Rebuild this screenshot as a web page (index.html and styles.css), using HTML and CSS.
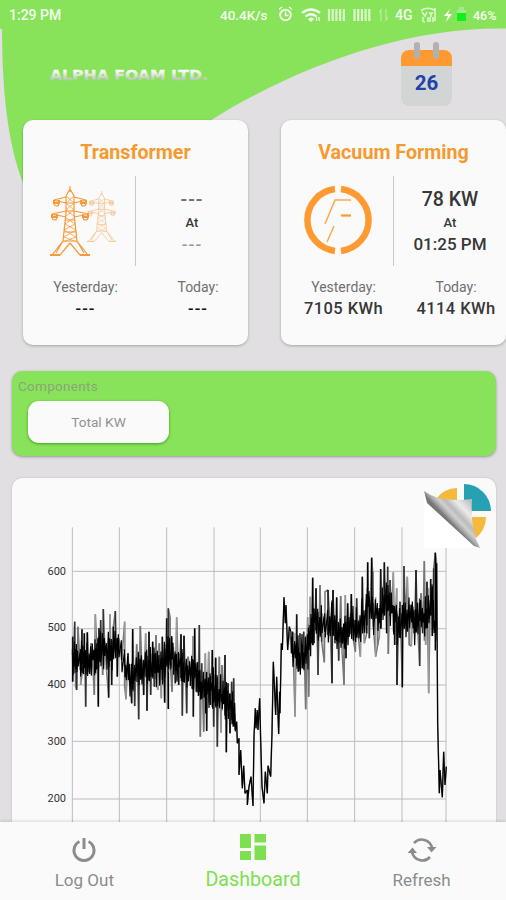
FILE: index.html
```html
<!DOCTYPE html>
<html lang="en">
<head>
<meta charset="utf-8">
<title>Alpha Foam Dashboard</title>
<link rel="stylesheet" href="styles.css">
</head>
<body>
<div class="app">
  <svg class="backdrop" width="506" height="200" viewBox="0 0 506 200"><path fill="#89e35a" d="M0 0H506V28.500C420 27 331 55 253 96Q235 105 213 119L100 190H26Q2 137 2 29H0Z"/></svg>

  <header class="status">
    <span class="time">1:29 PM</span>
    <div class="status-right">
      <span class="speed">40.4K/s</span>
      <svg class="status-icons" width="122" height="20" viewBox="0 0 122 20" fill="none" stroke="#f4fff0">
        <circle cx="6.500" cy="10" r="5.300" stroke-width="1.800"/><path stroke-width="1.500" d="M6.500 6.500V10.500H9.500M0 4.500 3 2M13 4.500 10 2"/>
        <path stroke-width="2.200" d="M23 8Q32 1 41 8M26.500 11.500Q32 7 37.500 11.500"/><path fill="#f4fff0" stroke="none" d="M29 14Q32 11 35 14L32 17Z"/><path stroke-width="1.200" d="M37.500 16V12m2.500 0v4"/>
        <path stroke-width="2.200" opacity=".75" d="M50 4V16M53.700 4V16M57.400 4V16M61.100 4V16M64.800 4V16M75.500 4V16M79.200 4V16M82.900 4V16M86.600 4V16M90.300 4V16"/>
        <path opacity=".4" stroke-width="1.300" d="M102 16V5l-2 3M107 4V15l2-3"/>
      </svg>
      <span class="net">4G</span>
      <svg width="47" height="20" viewBox="0 0 47 20"><g fill="none" stroke="#f4fff0" stroke-width="1.500" opacity=".8"><path d="M1 5.500Q8 1 15 5.500M2 7l3 4 2-4M9 8h4M11 8v4M3 12v4q0 1 2 1M8 12v5M10 12v5M13 12v5M15 3v13"/></g><path fill="#fff" d="M30 4 24 11h4l-2 6 6-8h-4Z"/><path fill="#a6e98b" d="M37 5h2V2h5v3h2v3h-9Z"/><path fill="#0cf21c" d="M37 8h9v8H37Z"/></svg>
      <span class="pct">46%</span>
    </div>
  </header>

  <div class="brand">
    <svg class="wordmark" width="162" height="20" viewBox="0 0 162 20"><defs><linearGradient id="silver" x1="0" y1="0" x2="0" y2="1"><stop offset=".25" stop-color="#fff"/><stop offset=".8" stop-color="#bdc8b8"/></linearGradient></defs><text x="1" y="14.500" textLength="158" lengthAdjust="spacingAndGlyphs" fill="url(#silver)" stroke="url(#silver)">ALPHA FOAM LTD.</text></svg>
    <div class="calendar"><i></i><i></i><span>26</span></div>
  </div>

  <section class="meters">
    <article class="meter">
      <h2>Transformer</h2>
      <div class="reading">
        <svg class="towers" width="68" height="72" viewBox="0 0 68 72">
          <defs><g id="tower" fill="none" stroke="#f79a3b" stroke-width="1.200">
            <path d="M20 0V6M16 10 20 3 24 10V27L27 55 38 69M16 10V27L13 55 2 69M16 11 4 14 16 17M24 11 36 14 24 17M16 25 2 28 16 31M24 25 39 28 24 31M13 55H27M16 17H24M16 25H24M15 34H25M14 46H26M13 55 6 67M27 55 34 67M20 57 10 69M20 57 30 69"/>
            <path stroke-width=".8" d="M16 10 24 17 16 24 25 31 15 38 26 44 14 51 27 56M24 10 16 17 24 24 15 31 25 38 14 44 26 51 13 56"/>
            <path stroke-width="2" d="M0 69H10M30 69H40M4 14v3H9V14M31 14v3H36V14M2 28v3H7V28M33 28v3H38V28"/><ellipse cx="6.500" cy="18" rx="2.300" ry="2"/><ellipse cx="33.500" cy="18" rx="2.300" ry="2"/><ellipse cx="4.500" cy="32" rx="2.300" ry="2"/><ellipse cx="35.500" cy="32" rx="2.300" ry="2"/>
          </g></defs>
          <use href="#tower" transform="translate(37 5) scale(.73)" opacity=".5"/><use href="#tower"/>
        </svg>
        <div class="power"><b class="muted">---</b><span>At</span><em class="faint">---</em></div>
      </div>
      <div class="totals"><div><span>Yesterday:</span><b class="none">---</b></div><div><span>Today:</span><b class="none">---</b></div></div>
    </article>
    <article class="meter">
      <h2>Vacuum Forming</h2>
      <div class="reading">
        <svg class="forming" width="70" height="70" viewBox="0 0 70 70" fill="none" stroke="#ff9a32"><path stroke-width="6.500" d="M32 4.100A31.100 31.100 0 0 0 32 65.900M38 4.100A31.100 31.100 0 0 1 38 65.900"/><path stroke-width="1.500" opacity=".85" d="M48 15H32L22 39M31 41 24 57"/><path stroke-width="2.200" d="M38 30.500h10"/></svg>
        <div class="power"><b>78 KW</b><span>At</span><em>01:25 PM</em></div>
      </div>
      <div class="totals"><div><span>Yesterday:</span><b>7105 KWh</b></div><div><span>Today:</span><b>4114 KWh</b></div></div>
    </article>
  </section>

  <section class="components"><h3>Components</h3><button>Total KW</button></section>

  <section class="chart-card">
    <svg class="chart" width="450" height="312" viewBox="0 0 1350 936"></svg>
    <svg class="peel" width="72" height="72" viewBox="0 0 72 72"><defs><linearGradient id="fold" gradientUnits="userSpaceOnUse" x1="25" y1="38" x2="46" y2="18"><stop offset="0" stop-color="#777"/><stop offset=".12" stop-color="#aaa"/><stop offset=".25" stop-color="#d0d0d0"/><stop offset=".4" stop-color="#bbb"/><stop offset=".65" stop-color="#ececec"/><stop offset="1" stop-color="#c0c0c0"/></linearGradient></defs><path fill="#fff" d="M0 9 56 65H0Z"/><path fill="#f5b93d" d="M33 20V5A27 27 0 0 0 12 16L28 23ZM46 34H62A28 28 0 0 1 52 55L42 43Z"/><path fill="#26a0b3" d="M40 1V28H67A27 27 0 0 0 40 1Z"/><path fill="url(#fold)" d="M0 8Q16 20 48 16 46 46 56 65L50 63 3 20Z"/></svg>
  </section>

  <nav class="tabs">
    <a><svg width="24" height="26" viewBox="0 0 24 26" fill="none" stroke="#8c8c8c" stroke-width="3"><path d="M7.500 4.500A10 10 0 1 0 16.500 4.500M12 1V12"/></svg><span>Log Out</span></a>
    <a class="active"><svg width="26" height="26" viewBox="0 0 26 26" fill="#7edf50"><path d="M0 0H11V14H0ZM14.500 0H26V8.500H14.500ZM0 17H11V26H0ZM14.500 11.500H26V26H14.500Z"/></svg><span>Dashboard</span></a>
    <a><svg width="28" height="26" viewBox="0 0 28 26" fill="none" stroke="#8c8c8c" stroke-width="2.600"><path d="M6 6A10.500 10.500 0 0 1 24 11M22 20A10.500 10.500 0 0 1 4 15"/><path fill="#8c8c8c" stroke="none" d="M19 10H28.500L23.500 15.500ZM-.5 16H9L4.500 10.500Z"/></svg><span>Refresh</span></a>
  </nav>
</div>
<script src="chart.js"></script>
</body>
</html>
```

FILE: styles.css
```css
* { box-sizing: border-box; }
body { margin: 0; background: #e1dfe1; font-family: Roboto, sans-serif; color: #373737; }
.app { position: relative; width: 506px; height: 900px; overflow: hidden; display: flex; flex-direction: column; }
.backdrop { position: absolute; top: 0; left: 0; }
.app > :not(.backdrop) { position: relative; flex-shrink: 0; }
.status { height: 30px; display: flex; align-items: center; justify-content: space-between; padding: 0 8px 0 9px; font-size: 13px; font-weight: 500; color: #f4fff0; }
.time { font-size: 14px; }
.status-right { display: flex; align-items: center; }
.speed { width: 59px; font-size: 13.5px; }
.status-right svg { flex: none; }
.status-icons { margin-right: -6px; }
.net { width: 25px; font-size: 14px; }
.pct { margin-left: 6px; width: 25px; font-size: 12.5px; white-space: nowrap; }
.brand { height: 90px; display: flex; justify-content: space-between; padding: 12px 54px 0 49px; }
.wordmark { margin-top: 23px; }
.wordmark text { font: 700 14px "DejaVu Sans", sans-serif; stroke-width: .3px; }
.calendar { position: relative; width: 51px; height: 56px; margin-top: 8px; border-radius: 8px; background: linear-gradient(#ff9a32 16px, #d3d4d4 16px); color: #2041ab; font-size: 20.5px; font-weight: 700; text-align: center; padding-top: 21px; line-height: 25px; }
.calendar i { position: absolute; top: -8px; left: 13px; width: 6px; height: 17px; border-radius: 3px; background: #b2b0b2; }
.calendar i + i { left: 32px; }
.meters { display: flex; gap: 33px; padding-left: 23px; height: 251px; }
.meter { flex: none; width: 225px; height: 225px; background: #fafafa; border-radius: 10px; box-shadow: 0 1px 3px #0004; padding-top: 21px; }
h2 { margin: 0; font-size: 19.7px; line-height: 24px; font-weight: 700; color: #f59a30; text-align: center; }
.reading { display: flex; height: 90px; margin-top: 11px; }
.reading > svg { margin: 10px 17px 0 27px; flex: none; overflow: visible; }
.reading > .forming { margin: 9px 20px 0 22px; }
.power { flex: 1; border-left: 1px solid #c8c8c8; display: flex; flex-direction: column; align-items: center; padding-top: 12px; }
.power b { font-size: 19.5px; line-height: 24px; font-weight: 500; }
.power span { font-size: 13px; line-height: 22px; font-weight: 500; }
.power em { font-size: 17px; line-height: 20px; font-style: normal; font-weight: 500; white-space: nowrap; }
.power .muted { color: #707070; letter-spacing: 1px; }
.power .faint { color: #999; letter-spacing: 1px; }
.totals { display: grid; grid-template-columns: 125px 100px; margin-top: 11px; text-align: center; }
.totals span { display: block; font-size: 14px; line-height: 21px; color: #707070; }
.totals b { display: block; font-size: 16.500px; line-height: 21px; font-weight: 500; letter-spacing: .4px; white-space: nowrap; }
.totals .none { color: #111; letter-spacing: 1px; }
.components { width: 484px; height: 85px; margin-left: 12px; border-radius: 10px; background: #89e35a; box-shadow: 0 1px 3px #0005; padding: 7px 6px; }
h3 { margin: 0; font-size: 13.500px; line-height: 17px; font-weight: 400; color: #8aa579; letter-spacing: .3px; }
.components button { display: block; width: 141px; height: 42px; margin: 6px 0 0 10px; border: 0; border-radius: 11px; background: #fafafa; box-shadow: 0 1px 3px #168000aa; color: #929292; font: 13.700px Roboto, sans-serif; }
.chart-card { width: 484px; height: 344px; margin: 22px 0 0 12px; background: #fafafa; border-radius: 10px 10px 0 0; box-shadow: 0 0 2px #0003; padding: 32px 0 0 18px; }
.chart { display: block; }
.chart text { font: 33px Roboto, sans-serif; fill: #333; text-anchor: end; }
.peel { position: absolute; top: 5px; left: 412px; }
.tabs { height: 78px; display: grid; grid-template-columns: repeat(3, 1fr); background: #fafafa; color: #8c8c8c; box-shadow: 0 -1px 3px #0002; }
.tabs a { display: flex; flex-direction: column; align-items: center; padding-top: 15px; font-size: 17px; line-height: 22px; }
.tabs svg { margin-bottom: 6px; overflow: visible; }
.tabs .active { padding-top: 12px; font-size: 19.700px; color: #7edf50; }
.tabs .active svg { margin-bottom: 9px; }
```

FILE: chart.js
```js
// Load samples: x and y in thirds of a pixel.
const samples = `128,380 128,515 134,335 137,530 140,540 144,350 151,480 156,358 152,525 160,460 163,370 167,590 172,367 178,487 183,400 188,460 193,555 196,312 200,400 205,590 207,355 210,455 212,330 218,495 220,297 224,395 230,485 236,563 240,313 245,525 250,350 256,303 262,500 266,385 275,450 284,335 284,530 288,568 294,430 299,520 305,580 308,357 314,588 320,403 326,628 331,348 335,450 341,555 347,370 351,602 357,365 362,555 368,395 373,530 378,375 383,540 388,400 394,565 397,380 404,578 410,325 415,597 415,295 420,320 422,480 426,545 430,410 436,520 440,322 446,525 453,373 457,617 462,377 470,610 474,440 480,475 486,535 489,378 490,620 494,355 499,545 504,545 508,345 511,680 515,460 521,665 526,430 530,663 536,425 541,585 547,420 551,650 557,443 562,710 568,440 573,668 576,465 580,578 585,435 589,727 594,520 600,670 605,515 609,650 611,505 615,660 620,635 622,700 627,685 627,795 632,720 637,835 641,767 645,850 652,840 652,885 657,830 663,800 669,888 672,680 676,595 678,655 682,600 684,660 689,565 692,690 696,830 702,880 706,785 712,850 714,767 722,800 726,670 730,455 737,615 740,500 746,672 749,545 750,610 754,400 757,420 762,262 766,340 768,285 773,420 778,350 784,430 788,365 795,620 800,313 805,485 810,370 817,475 821,365 827,598 833,322 836,560 841,260 844,400 848,203 852,400 858,235 864,495 870,225 875,395 883,457 885,245 894,240 900,340 906,520 909,240 915,400 920,262 926,452 932,258 937,435 942,525 946,255 948,445 953,280 958,380 964,252 970,390 976,425 980,265 986,390 991,440 997,200 1003,400 1010,370 1013,157 1018,385 1025,143 1028,185 1030,350 1037,440 1043,405 1048,380 1052,177 1058,310 1063,157 1070,370 1073,170 1075,432 1080,210 1085,310 1090,187 1094,405 1100,235 1101,525 1107,320 1110,275 1117,532 1122,168 1127,320 1132,200 1138,405 1144,408 1148,290 1153,370 1158,180 1163,350 1169,468 1173,250 1178,370 1183,153 1187,405 1191,215 1196,550 1202,207 1207,378 1211,175 1216,128 1220,160 1223,640 1228,850 1230,780 1237,862 1241,725 1245,825 1249,770`
  .split(' ').map(p => p.split(',').map(Number));

const dense = x => x < 620 || (x > 780 && x < 1218);
const peaks = [];
const core = [];
samples.forEach(([x, y], i) => {
  const near = samples.slice(Math.max(0, i - 3), i + 4);
  const mean = near.reduce((sum, p) => sum + p[1], 0) / near.length;
  const reach = y - mean;
  // Each reading is a narrow vertical excursion from the local load level.
  if (dense(x)) {
    const shade = ['#111', '#777', '#000', '#999', '#333'][(i * 7 + (i >> 2)) % 5];
    peaks.push(`<path d="M${x} ${mean - reach * .25}V${y}" stroke="${shade}" stroke-width="4.5"/>`);
    const swing = 22 + (i * 13) % 32;
    core.push(`${x - 1},${mean - swing}`, `${x + 1},${mean + swing}`);
  } else core.push(`${x},${y}`);
});
const grid = [127, 268, 410, 552, 691, 832, 974, 1116, 1248].map(x => `M${x} 52V936`).join('')
  + [184, 356, 525, 694, 867].map(y => `M127 ${y}H1248`).join('');
const labels = [600, 500, 400, 300, 200].map((n, i) => `<text x="108" y="${[194, 364, 535, 705, 875][i]}">${n}</text>`).join('');
document.querySelector('.chart').innerHTML = `<path d="${grid}" fill="none" stroke="#bcbcbc" stroke-width="3"/>${labels}
<polyline points="${samples.map(p => p.join(',')).join(' ')}" fill="none" stroke="#777" stroke-width="4.5" stroke-linejoin="bevel"/>
${peaks.join('')}
<polyline points="${core.join(' ')}" fill="none" stroke="#000" stroke-width="3.5" stroke-linejoin="bevel"/>`;
```
